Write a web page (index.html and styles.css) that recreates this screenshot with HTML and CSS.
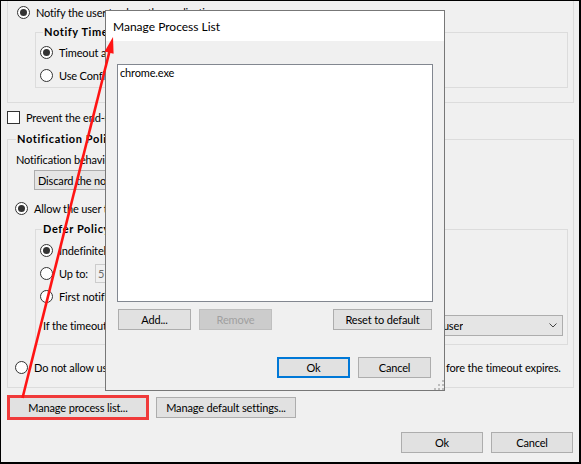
FILE: index.html
```html
<!doctype html>
<html>
<head>
<meta charset="utf-8">
<title>Application Settings</title>
<link rel="stylesheet" href="styles.css">
</head>
<body>
<div class="window">

  <div class="grp-clip">
    <div class="row"><span class="radio on"></span>Notify the user to close the application</div>
    <fieldset class="grp g-notify">
      <legend>Notify Timeout Policy</legend>
      <div class="row"><span class="radio on"></span>Timeout after the user is notified</div>
      <div class="row next"><span class="radio"></span>Use Configuration Manager settings</div>
    </fieldset>
  </div>

  <div class="row check-row"><span class="check"></span>Prevent the end-user from closing the notification</div>

  <fieldset class="grp g-policy">
    <legend>Notification Policy</legend>
    <div class="row label">Notification behavior:</div>
    <div class="combo short">Discard the notification after the timeout</div>
    <div class="row allow"><span class="radio on"></span>Allow the user to defer the notification</div>
    <fieldset class="grp g-defer">
      <legend>Defer Policy</legend>
      <div class="trow"><span class="radio on"></span>Indefinitely</div>
      <div class="trow"><span class="radio"></span>Up to:<span class="spin">5</span></div>
      <div class="trow"><span class="radio"></span>First notification only</div>
      <div class="trow timeout">
        <span class="timeout-label">If the timeout expires, the application will</span>
        <div class="combo wide">
          <span class="combo-text">Close the application and notify the user</span>
          <span class="chev"><svg width="8" height="5" viewBox="0 0 8 5"><path d="M0.5 0.5 L4 4 L7.5 0.5" fill="none" stroke="#444" stroke-width="1"/></svg></span>
        </div>
      </div>
    </fieldset>
    <div class="row deny"><span class="radio"></span><span class="cut">Do not allow users to defer the notification; close the application be</span>fore the timeout expires.</div>
  </fieldset>

  <div class="actions">
    <button class="btn marked">Manage process list...</button>
    <button class="btn">Manage default settings...</button>
  </div>

  <div class="footer">
    <button class="btn main">Ok</button>
    <button class="btn main">Cancel</button>
  </div>

  <div class="dialog">
    <div class="dialog-title">Manage Process List</div>
    <div class="dialog-body">
      <div class="list">chrome.exe</div>
      <div class="list-actions">
        <button class="btn small">Add...</button>
        <button class="btn small" disabled>Remove</button>
        <button class="btn reset">Reset to default</button>
      </div>
      <div class="dialog-foot">
        <button class="btn small default">Ok</button>
        <button class="btn small">Cancel</button>
      </div>
    </div>
    <svg class="grip" width="10" height="10" viewBox="0 0 10 10">
      <rect x="8" y="0" width="2" height="2"/>
      <rect x="4" y="4" width="2" height="2"/>
      <rect x="8" y="4" width="2" height="2"/>
      <rect x="0" y="8" width="2" height="2"/>
      <rect x="4" y="8" width="2" height="2"/>
      <rect x="8" y="8" width="2" height="2"/>
    </svg>
  </div>

  <svg class="arrow" width="581" height="464" viewBox="0 0 581 464">
    <line x1="22.5" y1="398" x2="109.6" y2="51" stroke="#ff1414" stroke-width="2.6"/>
    <polygon points="113,37 113.6,53.8 104.6,51.4" fill="#ff1414"/>
  </svg>

</div>
</body>
</html>
```

FILE: styles.css
```css
*{
box-sizing:border-box;
}
body{
margin:0;
font-family:Lato,"Liberation Sans",sans-serif;
font-size:11px;
letter-spacing:-0.15px;
color:#000;
}
.window{
position:relative;
width:581px;
height:464px;
overflow:hidden;
background:#f0f0f0;
border-style:solid;
border-color:#000;
border-width:1px 2px 2px 1px;
}
.row{
display:flex;
align-items:center;
height:15px;
white-space:nowrap;
}
.trow{
display:flex;
align-items:center;
height:21px;
white-space:nowrap;
margin-bottom:2px;
}
.radio{
position:relative;
flex:none;
width:13px;
height:13px;
margin-right:6px;
border:1px solid #333;
border-radius:50%;
background:#fff;
}
.radio.on::after{
content:"";
position:absolute;
left:2px;
top:2px;
width:7px;
height:7px;
border-radius:50%;
background:#333;
}
.check{
flex:none;
width:13px;
height:13px;
margin-right:6px;
border:1px solid #333;
background:#fff;
}

/* group boxes */
.grp{
margin:0;
min-width:0;
border:1px solid #dcdcdc;
}
.grp legend{
padding:0 1px;
line-height:14px;
font-weight:bold;
letter-spacing:0.6px;
white-space:nowrap;
}
.grp-clip{
margin:0 5px 0 6px;
padding:4px 0 14px 9px;
border:1px solid #dcdcdc;
border-top:0;
}
.g-notify{
margin:5px 5px 0 18px;
padding:6px 0 4px 4px;
}
.g-notify legend{
margin-left:3px;
}
.g-notify .next{
margin-top:8px;
}
.check-row{
margin:7px 0 0 6px;
}
.g-policy{
margin:7px 5px 0 6px;
padding:6px 0 12px 7px;
}
.g-policy legend{
margin-left:1px;
}
.label{
margin-left:1px;
}
.combo{
display:flex;
align-items:center;
height:20px;
border:1px solid #adadad;
background:#e5e5e5;
white-space:nowrap;
overflow:hidden;
}
.short{
width:230px;
margin:3px 0 0 19px;
padding-left:3px;
}
.allow{
margin-top:11px;
}
.g-defer{
margin:6px 5px 0 20px;
padding:4px 4px 8px 4px;
}
.g-defer legend{
margin-left:2px;
}
.spin{
display:flex;
align-items:center;
width:44px;
height:19px;
margin-left:7px;
padding-left:2px;
border:1px solid #ccc;
background:#f0f0f0;
color:#6d6d6d;
}
.timeout{
margin:8px 0 0 0;
}
.timeout-label{
margin-left:3px;
}
.wide{
width:360px;
height:21px;
margin-left:auto;
}
.combo-text{
flex:1;
text-align:right;
overflow:hidden;
}
.chev{
display:flex;
justify-content:flex-end;
flex:none;
width:99px;
padding-right:5px;
}
.deny{
margin-top:15px;
}
.cut{
flex:none;
width:412px;
overflow:hidden;
}

/* buttons */
.btn{
height:21px;
padding:0;
border:1px solid #adadad;
background:#e1e1e1;
font:inherit;
letter-spacing:inherit;
color:#000;
white-space:nowrap;
}
.btn:disabled{
border-color:#bfbfbf;
background:#cccccc;
color:#a0a0a0;
}
.actions{
display:flex;
gap:9px;
margin:9px 0 0 8px;
}
.actions .btn{
width:140px;
}
.actions .marked{
width:138px;
border-color:#f03a3a;
outline:2px solid #f03a3a;
}
.footer{
display:flex;
justify-content:flex-end;
gap:8px;
margin:14px 6px 0 0;
}
.main{
width:82px;
}

/* dialog */
.dialog{
position:absolute;
left:104px;
top:9px;
width:340px;
height:381px;
display:flex;
flex-direction:column;
border:1px solid #777;
background:#f0f0f0;
}
.dialog-title{
display:flex;
align-items:center;
height:30px;
padding-left:7px;
background:#fff;
font-size:12px;
letter-spacing:0;
}
.dialog-body{
padding:23px 11px 0;
}
.list{
height:238px;
padding:0 2px;
line-height:15px;
border:1px solid #828790;
background:#fff;
}
.list-actions{
display:flex;
gap:8px;
margin-top:7px;
padding:0 1px;
}
.small{
width:73px;
}
.reset{
width:99px;
margin-left:auto;
}
.dialog-foot{
display:flex;
justify-content:flex-end;
gap:8px;
margin-top:27px;
padding-right:2px;
}
.default{
border:2px solid #0078d7;
}
.grip{
position:absolute;
right:0;
bottom:0;
fill:#bdbdbd;
}
.arrow{
position:absolute;
left:-1px;
top:-1px;
pointer-events:none;
}
```
